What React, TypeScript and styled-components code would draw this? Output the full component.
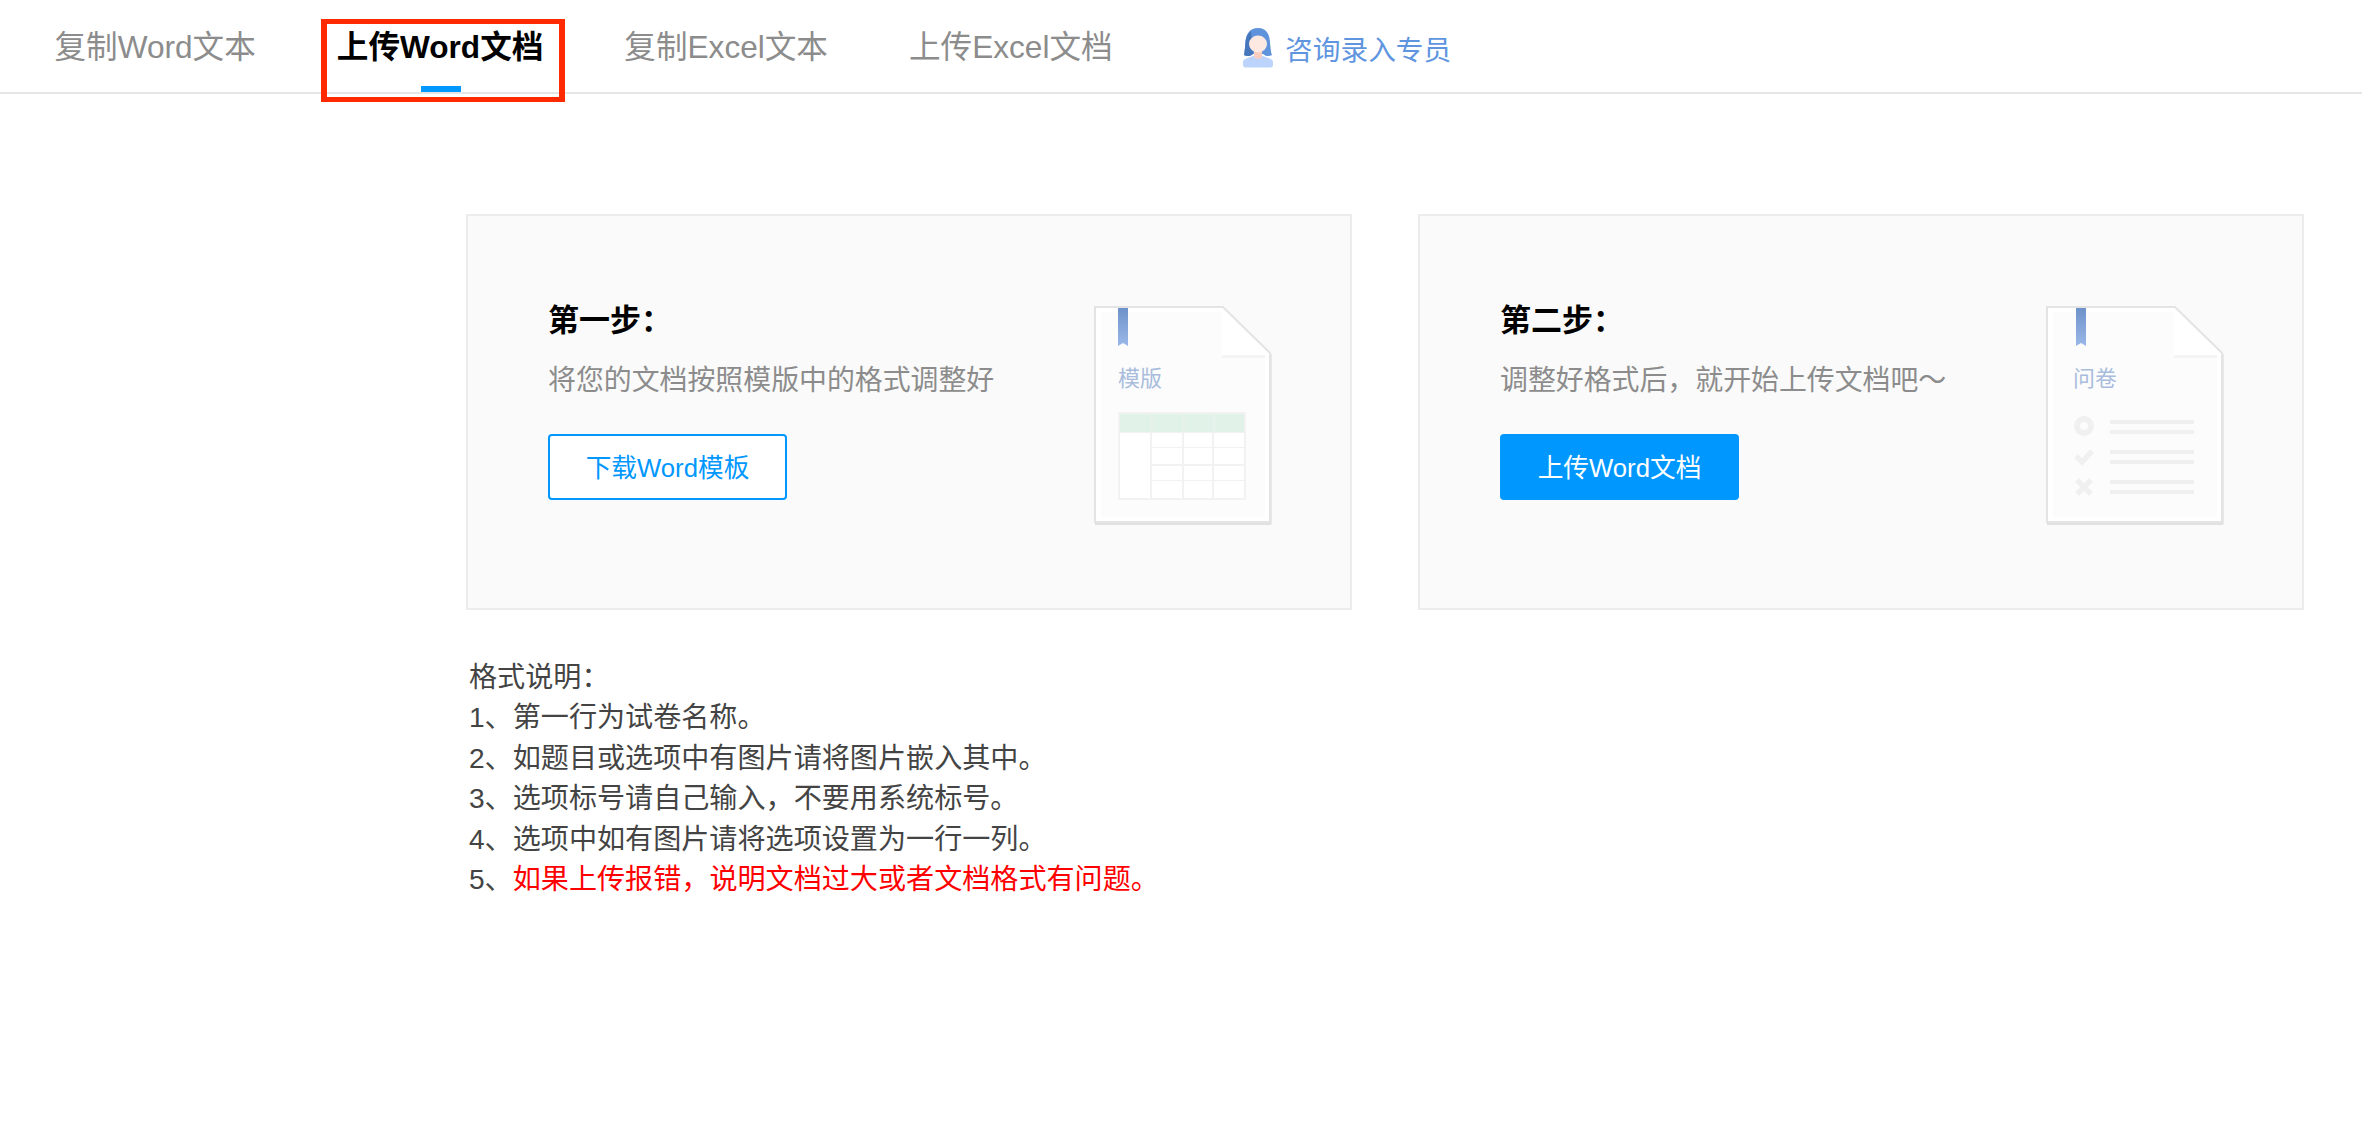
import React from "react";
import styled, { createGlobalStyle } from "styled-components";

const Global = createGlobalStyle`
  html, body { margin: 0; padding: 0; background: #fff; }
  body { font-family: "Liberation Sans", "Noto Sans CJK SC", sans-serif; }
`;
const Page = styled.div`
  width: 2362px;
  min-height: 1140px;
  background: #fff;
`;
const Nav = styled.nav`
  display: flex;
  align-items: stretch;
  height: 92px;
  padding-left: 13px;
  border-bottom: 2px solid #e6e6e6;
`;
const Tab = styled.a<{ $active?: boolean }>`
  position: relative;
  padding: 0 41.5px 0 41.5px;
  font-size: 31.6px;
  line-height: 94px;
  height: 92px;
  white-space: nowrap;
  color: ${(p) => (p.$active ? "#000" : "#8c8c8c")};
  font-weight: ${(p) => (p.$active ? 700 : 400)};
  margin-right: -2px;
`;
const Indicator = styled.span`
  position: absolute;
  left: 50%;
  bottom: 0;
  width: 40px;
  height: 6px;
  margin-left: -19px;
  background: #0097ff;
`;
const Annotation = styled.span`
  position: absolute;
  left: 26px;
  top: 19px;
  width: 244px;
  height: 83px;
  box-sizing: border-box;
  border: solid #ff2a00;
  border-width: 5px 6px;
`;
const Consult = styled.a`
  display: flex;
  align-items: center;
  gap: 12px;
  margin-left: 91px;
  padding-top: 6px;
  height: 84px;
  font-size: 27.7px;
  color: #5f95df;
  white-space: nowrap;
`;
const Main = styled.main`
  padding: 120px 0 0 466px;
`;
const Cards = styled.div`
  display: grid;
  grid-template-columns: 886px 886px;
  gap: 66px;
`;
const Card = styled.section`
  box-sizing: border-box;
  height: 396px;
  display: flex;
  justify-content: space-between;
  padding: 85px 78px 0 80px;
  background: #fafafa;
  border: 2px solid #ececec;
`;
const StepText = styled.div`
  display: flex;
  flex-direction: column;
  align-items: flex-start;
`;
const StepTitle = styled.h3`
  margin: 0;
  font-size: 31px;
  line-height: 40px;
  font-weight: 700;
  color: #000;
`;
const StepDesc = styled.p`
  margin: 20px 0 0;
  font-size: 27.9px;
  line-height: 40px;
  color: #8c8c8c;
  white-space: nowrap;
`;
const Button = styled.button<{ $primary?: boolean }>`
  box-sizing: border-box;
  width: 239px;
  height: 66px;
  margin-top: 33px;
  padding: 0 0 3px;
  border: 2px solid #0097ff;
  border-radius: 4px;
  font-family: inherit;
  font-size: 25.7px;
  background: ${(p) => (p.$primary ? "#0097ff" : "#fff")};
  color: ${(p) => (p.$primary ? "#fff" : "#0097ff")};
`;
const DocWrap = styled.div`
  width: 178px;
  height: 220px;
  margin-top: 5px;
  flex: none;
`;
const Notes = styled.div`
  margin: 48px 0 0 3px;
  font-size: 28.1px;
  line-height: 40.4px;
  color: #444;
`;
const NoteRow = styled.div`
  white-space: nowrap;
`;
const Alert = styled.span`
  color: #ff0000;
`;

const Sheet: React.FC<{ id: string; ribbonX: number; label: string; labelX: number; children: React.ReactNode }> = ({
  id,
  ribbonX,
  label,
  labelX,
  children,
}) => (
  <svg width="178" height="220" viewBox="0 0 178 220">
    <defs>
      <linearGradient id={id} x1="0" y1="0" x2="0" y2="1">
        <stop offset="0" stopColor="#6d92ca" />
        <stop offset="1" stopColor="#9bb8e8" />
      </linearGradient>
    </defs>
    <rect x="1" y="216" width="176" height="3" fill="#d4d4d4" opacity=".7" />
    <rect x="176" y="48" width="2" height="170" fill="#dcdcdc" opacity=".6" />
    <path d="M1 1 H129 L176 47 V216 H1 Z" fill="#fff" stroke="#e4e4e4" strokeWidth="2" />
    <path d="M7 6 H128 V49 H171 V211 H7 Z" fill="#fcfcfc" />
    <path d="M128 49 H171 V52 H128 Z" fill="#f4f4f4" />
    <path d={`M${ribbonX} 2 h10 v38 l-5 -3 l-5 3 Z`} fill={`url(#${id})`} />
    <text x={labelX} y="80" fontSize="22" fill="#a9bcdc" fontFamily="'Noto Sans CJK SC', sans-serif">
      {label}
    </text>
    {children}
  </svg>
);

const TemplateDoc = () => (
  <Sheet id="rib1" ribbonX={24} label="模版" labelX={24}>
    <rect x="24" y="106" width="128" height="88" fill="#f2f2f2" />
    <rect x="26" y="108" width="124" height="18" fill="#e1f3e9" />
    <rect x="26" y="127" width="30" height="65" fill="#fff" />
    {[58, 90, 120].map((x, i) => (
      <g key={x}>
        {[
          [127, 14],
          [142, 16],
          [160, 14],
          [175, 17],
        ].map(([y, h]) => (
          <rect key={y} x={x} y={y} width={[30, 28, 30][i]} height={h} fill="#fff" />
        ))}
      </g>
    ))}
    {[57, 89, 119].map((x) => (
      <rect key={x} x={x} y="108" width="1.5" height="18" fill="#eaf0ec" />
    ))}
  </Sheet>
);

const QuizDoc = () => (
  <Sheet id="rib2" ribbonX={30} label="问卷" labelX={27}>
    <circle cx="38" cy="120" r="7" fill="none" stroke="#f0f0f0" strokeWidth="6" />
    <path d="M30 150 L36 156 L46 145" fill="none" stroke="#f0f0f0" strokeWidth="5.5" />
    <path d="M31 174 L45 188 M45 174 L31 188" fill="none" stroke="#f0f0f0" strokeWidth="5.5" />
    {[114, 124, 144, 154, 174, 184].map((y) => (
      <rect key={y} x="64" y={y} width="84" height="4" fill="#f0f0f0" />
    ))}
  </Sheet>
);

const AgentIcon = () => (
  <svg width="30" height="40" viewBox="0 0 30 40">
    <path d="M0 37 V34 C0 31 5 30 10 28 H20 C25 30 30 31 30 34 V37 C30 38.500 29 39.500 27.500 39.500 H2.500 C1 39.500 0 38.500 0 37 Z" fill="#bcd3fb" />
    <path d="M15 0 C6 0 3 7 2.500 14 C2 20 1.500 25 1 27 C4 29 8 28 10 26 H20 C22 28 26 29 29 27 C28 25 27.500 20 27 14 C26.500 7 24 0 15 0 Z" fill="#5f94dc" />
    <path d="M8 3 C4 6 3 10 2.500 14 C2 20 1.500 25 1 27 C4 29 8 28 10 26 L9 14 Z" fill="#4676bb" />
    <path d="M11 20 H19 V29 C17 31.500 13 31.500 11 29 Z" fill="#f8cdbf" />
    <ellipse cx="15" cy="16" rx="9" ry="8.500" fill="#fde9e1" />
  </svg>
);

export default function App() {
  return (
    <Page>
      <Global />
      <Nav>
        <Tab>复制Word文本</Tab>
        <Tab $active>
          上传Word文档
          <Indicator />
          <Annotation />
        </Tab>
        <Tab>复制Excel文本</Tab>
        <Tab>上传Excel文档</Tab>
        <Consult>
          <AgentIcon />
          咨询录入专员
        </Consult>
      </Nav>
      <Main>
        <Cards>
          <Card>
            <StepText>
              <StepTitle>第一步：</StepTitle>
              <StepDesc>将您的文档按照模版中的格式调整好</StepDesc>
              <Button>下载Word模板</Button>
            </StepText>
            <DocWrap>
              <TemplateDoc />
            </DocWrap>
          </Card>
          <Card>
            <StepText>
              <StepTitle>第二步：</StepTitle>
              <StepDesc>调整好格式后，就开始上传文档吧～</StepDesc>
              <Button $primary>上传Word文档</Button>
            </StepText>
            <DocWrap>
              <QuizDoc />
            </DocWrap>
          </Card>
        </Cards>
        <Notes>
          <NoteRow>格式说明：</NoteRow>
          <NoteRow>1、第一行为试卷名称。</NoteRow>
          <NoteRow>2、如题目或选项中有图片请将图片嵌入其中。</NoteRow>
          <NoteRow>3、选项标号请自己输入，不要用系统标号。</NoteRow>
          <NoteRow>4、选项中如有图片请将选项设置为一行一列。</NoteRow>
          <NoteRow>
            5、<Alert>如果上传报错，说明文档过大或者文档格式有问题。</Alert>
          </NoteRow>
        </Notes>
      </Main>
    </Page>
  );
}
